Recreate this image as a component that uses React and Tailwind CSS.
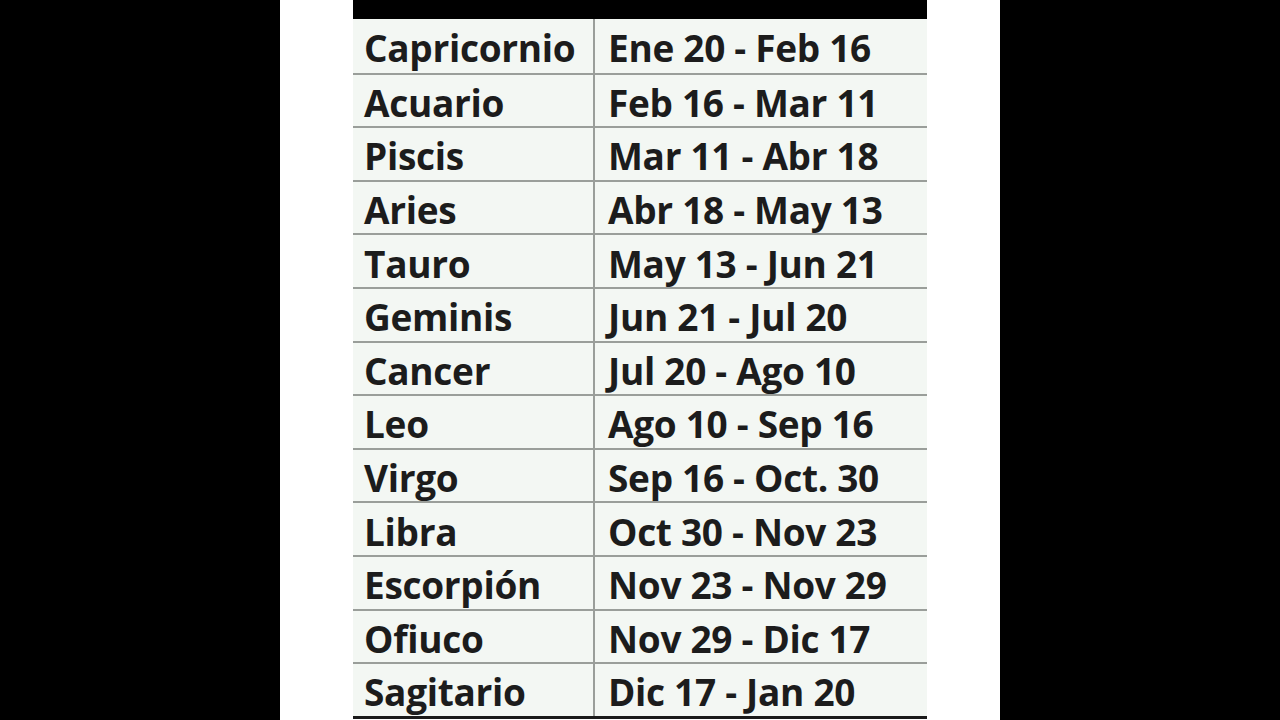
import React from "react";

const rows = [
  ["Capricornio", "Ene 20 - Feb 16"],
  ["Acuario", "Feb 16 - Mar 11"],
  ["Piscis", "Mar 11 - Abr 18"],
  ["Aries", "Abr 18 - May 13"],
  ["Tauro", "May 13 - Jun 21"],
  ["Geminis", "Jun 21 - Jul 20"],
  ["Cancer", "Jul 20 - Ago 10"],
  ["Leo", "Ago 10 - Sep 16"],
  ["Virgo", "Sep 16 - Oct. 30"],
  ["Libra", "Oct 30 - Nov 23"],
  ["Escorpión", "Nov 23 - Nov 29"],
  ["Ofiuco", "Nov 29 - Dic 17"],
  ["Sagitario", "Dic 17 - Jan 20"],
];

export default function App() {
  return (
    <div className="w-[1280px] h-[720px] bg-black flex justify-center overflow-hidden">
      <div className="w-[720px] h-[720px] bg-white flex flex-col items-start pl-[73px]">
        <div className="w-[574px] h-[19px] bg-black shrink-0" />
        <div
          className="w-[574px] bg-[#f3f7f3] border-b-[3px] border-[#1a1a1a] flex flex-col text-[#1c1c1c] font-bold"
          style={{ fontFamily: '"Open Sans", "Liberation Sans", sans-serif' }}
        >
          {rows.map(([sign, dates], i) => (
            <div
              key={sign}
              className={`flex h-[53.6px] items-center ${i > 0 ? "border-t-2 border-[#9a9e9a]" : ""}`}
            >
              <div className="w-[242px] h-full flex items-center pl-[11px] pt-[4px] border-r-2 border-[#9a9e9a] text-[37px] leading-none tracking-[-0.3px]">
                {sign}
              </div>
              <div className="flex-1 h-full flex items-center pl-[13px] pt-[4px] text-[37px] leading-none tracking-[-0.3px]">
                {dates}
              </div>
            </div>
          ))}
        </div>
      </div>
    </div>
  );
}
